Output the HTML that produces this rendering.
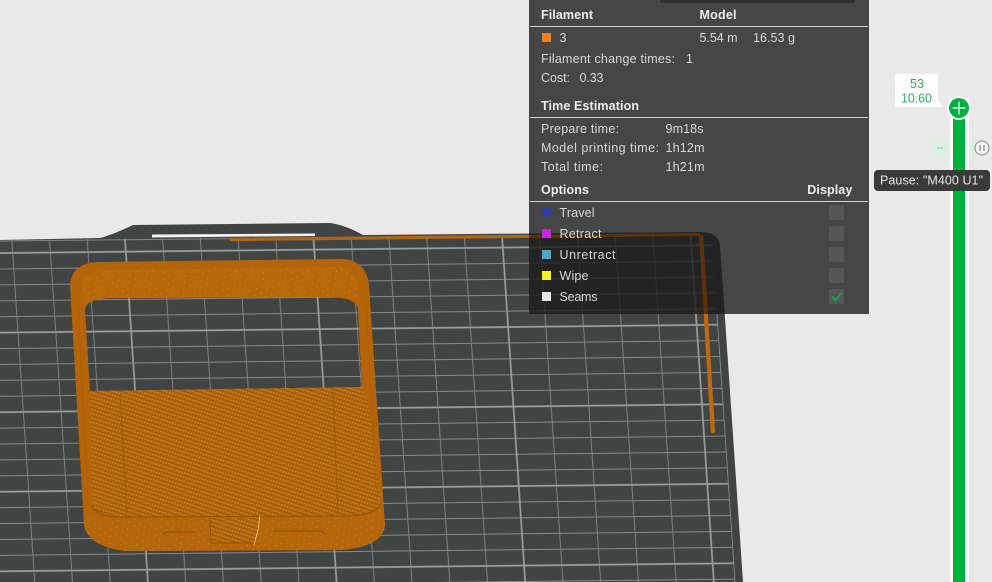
<!DOCTYPE html>
<html>
<head>
<meta charset="utf-8">
<style>
html,body{margin:0;padding:0;background:#e9e9e9;width:992px;height:582px;overflow:hidden}
svg{display:block;filter:blur(.35px)}
text{font-family:"Liberation Sans",sans-serif;font-size:12.5px;fill:#d8d8d8}
.b{font-weight:bold;fill:#ececec}
</style>
</head>
<body>
<svg width="992" height="582" viewBox="0 0 992 582" xmlns="http://www.w3.org/2000/svg">
<defs>
<pattern id="grid" patternUnits="userSpaceOnUse" width="188.5" height="79.5" patternTransform="matrix(1 -0.011 0.067 1 125.8 251.7)">
  <g stroke="#868989" stroke-width=".9" fill="none">
    <path d="M0 15.9H188.5M0 31.8H188.5M0 47.7H188.5M0 63.6H188.5"/>
    <path d="M37.7 0V79.5M75.4 0V79.5M113.1 0V79.5M150.8 0V79.5"/>
  </g>
  <g stroke="#9b9e9e" stroke-width="1.7" fill="none">
    <path d="M0 0H188.5M0 79.5H188.5M0 0V79.5M188.5 0V79.5"/>
  </g>
</pattern>
<pattern id="dots" patternUnits="userSpaceOnUse" width="6" height="4" patternTransform="rotate(18)">
  <rect width="6" height="4" fill="#b0660c"/>
  <circle cx="1" cy="1" r=".7" fill="#d08a25"/>
  <circle cx="4" cy="1" r=".7" fill="#d08a25"/>
  <rect y="2.800" width="6" height=".9" fill="#9c5a0a"/>
</pattern>
<pattern id="speck" patternUnits="userSpaceOnUse" width="11" height="7" patternTransform="rotate(8)">
  <circle cx="2" cy="2" r=".5" fill="#dc9333"/>
  <circle cx="8" cy="5" r=".45" fill="#dc9333"/>
</pattern>
<clipPath id="gridclip"><path d="M0 240L700 233L712 240L735 582H0Z"/></clipPath>
<clipPath id="panelclip"><rect x="529" y="0" width="340" height="314"/></clipPath>
</defs>

<rect width="992" height="582" fill="#e9e9e9"/>

<!-- bed -->
<path d="M0 240L100 238Q112 235 133 225L330 223Q345 225 363 235L700 232Q718 232 720 245L743 582H0Z" fill="#424444"/>
<g clip-path="url(#gridclip)">
  <rect x="0" y="225" width="760" height="360" fill="url(#grid)"/>
  <path d="M0 241L700 234" stroke="#868989" stroke-width=".9"/>
</g>
<path d="M712 240L735 582" stroke="#868989" stroke-width=".9"/>
<path d="M152 234.500L315 233.500L315 236L152 237.500Z" fill="#f2f2f2"/>

<!-- filament strips -->
<path d="M230 239.500L700 234.500" stroke="#b5650f" stroke-width="3.200"/>
<path d="M701 235L713 433" stroke="#c0680c" stroke-width="4.200"/>

<!-- object -->
<path fill-rule="evenodd" fill="#b5640a" d="M70 285Q72 262 100 262L340 259Q366 259 369 285L385 525Q383 547 340 550L125 551Q88 546 84 525ZM85 310Q86 298 115 298L330 297Q358 298 358 310L362 387L90 391Z"/>
<path d="M82 280Q90 270 110 270L335 267Q352 268 358 285L358 300Q350 297 330 297L115 298Q92 298 84 306Z" fill="#b9680a"/>
<path d="M82 280Q90 270 110 270L335 267Q352 268 358 285L358 300Q350 297 330 297L115 298Q92 298 84 306Z" fill="url(#speck)"/>
<path d="M90 391L362 387L368 400L381 503Q378 514 350 516L115 517Q95 515 92 505Z" fill="url(#dots)"/>
<path d="M84 517Q95 522 115 518L350 516Q375 515 382 505L385 525Q383 547 340 550L125 551Q88 546 84 525Z" fill="#b6660a"/>
<path d="M84 517Q95 522 115 518L350 516Q375 515 382 505L385 525Q383 547 340 550L125 551Q88 546 84 525Z" fill="url(#speck)"/>
<path d="M92 505Q95 515 115 517L350 516Q378 514 381 503" fill="none" stroke="#8e5409" stroke-width="1"/>
<path d="M120 393L127 516M333 389L338 515" fill="none" stroke="#9a5a0a" stroke-width=".8"/>
<path d="M78 300L88 505M366 300L377 505" fill="none" stroke="#a65e09" stroke-width=".7"/>
<path d="M210 518H260L257 543H212Z" fill="url(#dots)"/>
<path d="M210 518L211 543H257" fill="none" stroke="#8c5008" stroke-width="1"/>
<path d="M260 516L258 530L254 545" fill="none" stroke="#f0d8a8" stroke-width=".7"/>
<path d="M163 535L166 532H195M274 531H322L324 533" fill="none" stroke="#8a500a" stroke-width=".9"/>

<!-- panel -->
<g clip-path="url(#panelclip)">
  <rect x="529" y="0" width="340" height="314" fill="#464646"/>
  <path d="M0 240L100 238L363 235L700 232Q718 232 720 245L743 582H0Z" fill="#232323"/>
  <g clip-path="url(#gridclip)" opacity=".14">
    <rect x="0" y="225" width="760" height="360" fill="url(#grid)"/>
  </g>
  <path d="M529 236.500L700 234.500" stroke="#5c3308" stroke-width="3"/>
  <path d="M701 235L706 314" stroke="#5c3308" stroke-width="4.200"/>
  <path d="M660 0H855Q855 3 852 3H663Q660 3 660 0Z" fill="#2f2f2f"/>
</g>
<path d="M530 26.500H868M530 117.500H868M530 201.500H868" stroke="#d4d4d4" stroke-width="1"/>

<text class="b" x="541" y="19" textLength="52">Filament</text>
<text class="b" x="699.500" y="19" textLength="37">Model</text>
<rect x="542" y="33" width="9" height="9" fill="#f5811d"/>
<text x="559.500" y="42" textLength="6">3</text>
<text x="699.500" y="42" textLength="38">5.54 m</text>
<text x="753" y="42" textLength="42">16.53 g</text>
<text x="541" y="63" textLength="134">Filament change times:</text>
<text x="686" y="63" textLength="4">1</text>
<text x="541" y="82" textLength="29">Cost:</text>
<text x="579.500" y="82" textLength="24">0.33</text>
<text class="b" x="541" y="110" textLength="98">Time Estimation</text>
<text x="541" y="133" textLength="78">Prepare time:</text>
<text x="665.500" y="133" textLength="38">9m18s</text>
<text x="541" y="152" textLength="118">Model printing time:</text>
<text x="665.500" y="152" textLength="39">1h12m</text>
<text x="541" y="171" textLength="62">Total time:</text>
<text x="665.500" y="171" textLength="39">1h21m</text>
<text class="b" x="541" y="194" textLength="48">Options</text>
<text class="b" x="807.300" y="194" textLength="45">Display</text>

<rect x="542" y="208" width="9" height="9" fill="#2f3e9e"/>
<rect x="542" y="229" width="9" height="9" fill="#c928d8"/>
<rect x="542" y="250" width="9" height="9" fill="#4aa8cf"/>
<rect x="542" y="271" width="9" height="9" fill="#f5f51e"/>
<rect x="542" y="292" width="9" height="9" fill="#e6e6e6"/>
<text x="559.500" y="217" textLength="35">Travel</text>
<text x="559.500" y="238" textLength="42">Retract</text>
<text x="559.500" y="259" textLength="56">Unretract</text>
<text x="559.500" y="280" textLength="29">Wipe</text>
<text x="559.500" y="301" textLength="38">Seams</text>

<g fill="#555555">
  <rect x="829" y="205" width="15" height="15"/>
  <rect x="829" y="226" width="15" height="15"/>
  <rect x="829" y="247" width="15" height="15"/>
  <rect x="829" y="268" width="15" height="15"/>
  <rect x="829" y="289" width="15" height="15"/>
</g>
<path d="M832 296.500L835.300 300.500L842 292.500" fill="none" stroke="#1f9e50" stroke-width="2"/>

<!-- slider -->
<rect x="950" y="98" width="19" height="490" fill="#ffffff"/>
<rect x="953" y="108" width="12" height="480" fill="#00ae42"/>
<circle cx="959" cy="108" r="12" fill="#ffffff"/>
<circle cx="959" cy="108" r="10" fill="#00ae42"/>
<path d="M952.500 108H965.500M959 101.500V114.500" stroke="#ffffff" stroke-width="1.200"/>

<path d="M895 74H938V100L942 107H895Z" fill="#ffffff"/>
<text x="910" y="88" textLength="14" style="fill:#34a862">53</text>
<text x="901" y="102.500" textLength="31" style="fill:#34a862">10.60</text>

<rect x="933" y="140" width="13" height="15" fill="#d9f2e0"/>
<path d="M937 148H943" stroke="#9fcdb0" stroke-width="1.200"/>
<rect x="969" y="140" width="9" height="15" fill="#d9f2e0"/>
<circle cx="982" cy="148" r="7" fill="#f6f6f6" stroke="#8a8a8a" stroke-width="1"/>
<path d="M980 145V151M984 145V151" stroke="#8a8a8a" stroke-width="1.300"/>

<rect x="874" y="170" width="116" height="21" rx="4" fill="#3a3a3a"/>
<text x="880" y="184.500" textLength="103" style="fill:#e6e6e6">Pause: "M400 U1"</text>
</svg>
</body>
</html>
